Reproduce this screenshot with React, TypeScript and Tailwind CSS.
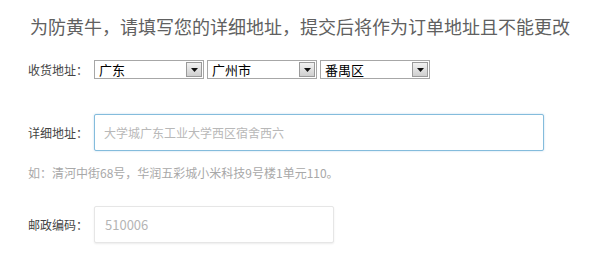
import React from "react";

function FakeSelect({ value }: { value: string }) {
  return (
    <div className="flex items-center w-[110px] h-[19px] border border-[#a7a7a7] bg-white pl-[4px] pr-[1px]">
      <span className="flex-1 text-[13px] leading-[17px] text-black">{value}</span>
      <div className="w-[16px] h-[15px] flex items-center justify-center border border-[#9a9a9a] bg-gradient-to-b from-[#f2f2f2] to-[#cfcfcf]">
        <svg width="7" height="4" viewBox="0 0 7 4">
          <path d="M0 0 H7 L3.5 4 Z" fill="#111" />
        </svg>
      </div>
    </div>
  );
}

export default function App() {
  return (
    <div
      className="w-[598px] h-[265px] bg-white overflow-hidden flex flex-col"
      style={{ fontFamily: '"Noto Sans CJK SC", "Noto Sans", sans-serif' }}
    >
      <div className="mt-[15px] pl-[30px] h-[22px] text-[18px] leading-[22px] text-[#606060] whitespace-nowrap">
        为防黄牛，请填写您的详细地址，提交后将作为订单地址且不能更改
      </div>

      <div className="mt-[23px] flex items-center pl-[28px]">
        <span className="w-[66px] text-[12px] leading-[19px] text-[#444]">收货地址：</span>
        <div className="flex gap-[3px]">
          <FakeSelect value="广东" />
          <FakeSelect value="广州市" />
          <FakeSelect value="番禺区" />
        </div>
      </div>

      <div className="mt-[35px] flex items-center pl-[28px]">
        <span className="w-[66px] text-[12px] text-[#444]">详细地址：</span>
        <div className="w-[450px] h-[37px] rounded-[2px] border border-[#84bcdc] shadow-[0_0_2px_rgba(120,180,220,0.5)] bg-white flex items-center pl-[9px]">
          <span className="text-[12px] text-[#b8b8b8]">大学城广东工业大学西区宿舍西六</span>
        </div>
      </div>

      <div className="mt-[13px] pl-[28px] text-[12px] leading-[18px] text-[#a8a8a8]">
        如：清河中街68号，华润五彩城小米科技9号楼1单元110。
      </div>

      <div className="mt-[24px] flex items-center pl-[28px]">
        <span className="w-[66px] text-[12px] text-[#444]">邮政编码：</span>
        <div className="w-[240px] h-[37px] rounded-[2px] border border-[#e6e6e6] shadow-[0_1px_2px_rgba(0,0,0,0.08)] bg-white flex items-center pl-[10px]">
          <span className="text-[13px] text-[#b5b5b5]">510006</span>
        </div>
      </div>
    </div>
  );
}
